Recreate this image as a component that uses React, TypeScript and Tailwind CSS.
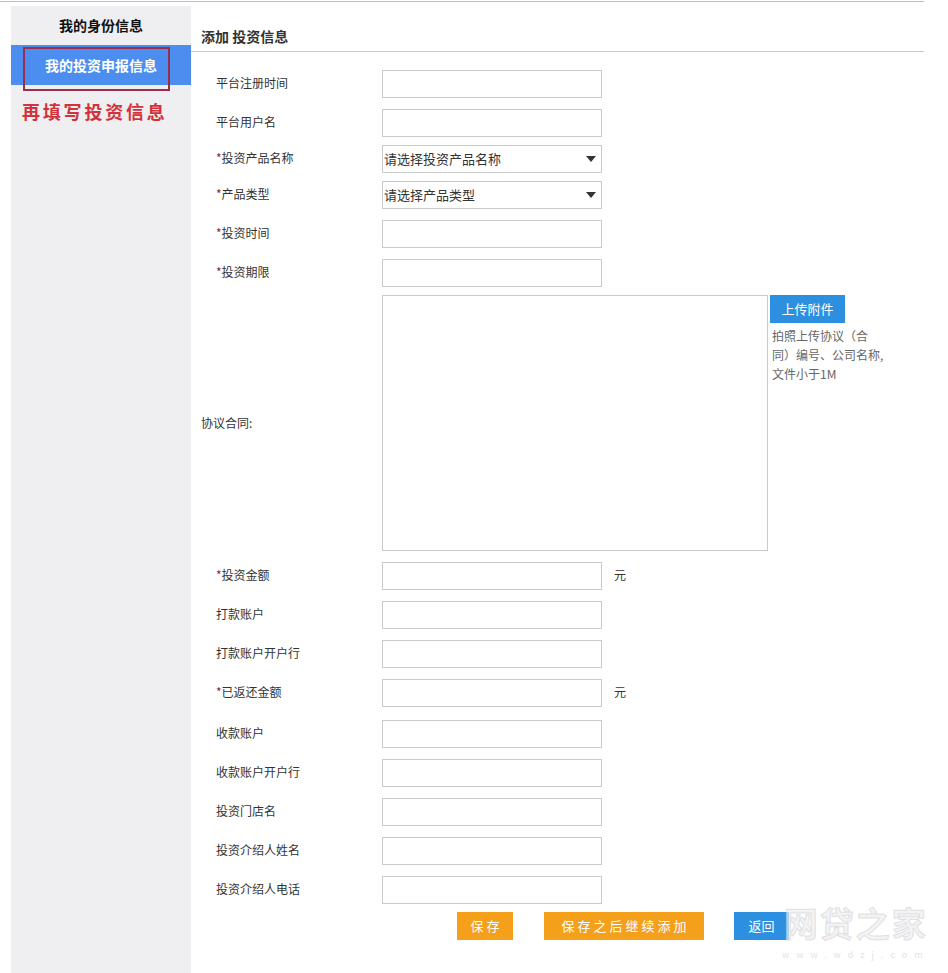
import React from "react";

const FONT = { fontFamily: '"Noto Sans CJK SC", "Noto Sans", sans-serif' };

type RowDef = {
  label: string;
  req?: boolean;
  select?: string;
  unit?: boolean;
  mt: string;
};

const topRows: RowDef[] = [
  { label: "平台注册时间", mt: "mt-[18px]" },
  { label: "平台用户名", mt: "mt-[11px]" },
  { label: "投资产品名称", req: true, select: "请选择投资产品名称", mt: "mt-[8px]" },
  { label: "产品类型", req: true, select: "请选择产品类型", mt: "mt-[8px]" },
  { label: "投资时间", req: true, mt: "mt-[11px]" },
  { label: "投资期限", req: true, mt: "mt-[11px]" },
];

const bottomRows: RowDef[] = [
  { label: "投资金额", req: true, unit: true, mt: "mt-[11px]" },
  { label: "打款账户", mt: "mt-[11px]" },
  { label: "打款账户开户行", mt: "mt-[11px]" },
  { label: "已返还金额", req: true, unit: true, mt: "mt-[11px]" },
  { label: "收款账户", mt: "mt-[13px]" },
  { label: "收款账户开户行", mt: "mt-[11px]" },
  { label: "投资门店名", mt: "mt-[11px]" },
  { label: "投资介绍人姓名", mt: "mt-[11px]" },
  { label: "投资介绍人电话", mt: "mt-[11px]" },
];

function Row({ r }: { r: RowDef }) {
  return (
    <div className={`flex items-center h-[28px] ${r.mt}`}>
      <div className="w-[191px] pl-[25px] pb-[3px] text-[12px] text-[#333] flex items-center">
        {r.req && <span className="text-[#8c1c3c] text-[12px] leading-none">*</span>}
        <span>{r.label}</span>
      </div>
      {r.select ? (
        <div className="w-[220px] h-[28px] border border-[#cacacd] bg-white flex items-center justify-between pl-[1px] pr-[5px]">
          <span className="text-[13px] text-[#333]">{r.select}</span>
          <svg width="10" height="6" viewBox="0 0 10 6">
            <path d="M0 0 L10 0 L5 6 Z" fill="#333" />
          </svg>
        </div>
      ) : (
        <div className="w-[220px] h-[28px] border border-[#cacacd] bg-white" />
      )}
      {r.unit && <span className="ml-[12px] pb-[3px] text-[12px] text-[#333]">元</span>}
    </div>
  );
}

export default function App() {
  return (
    <div className="w-[948px] h-[973px] bg-white relative overflow-hidden" style={FONT}>
      <div className="h-[1px] mt-[1px] w-[924px] bg-[#bdbdbd]" />
      <div className="flex mt-[4px] ml-[11px] h-[967px]">
        {/* Sidebar */}
        <div className="w-[180px] h-full bg-[#efeef1] relative">
          <div className="h-[39px] flex items-center justify-center text-[14px] font-bold text-[#111]">
            我的身份信息
          </div>
          <div className="h-[40px] bg-[#4b8ef0] flex items-center justify-center text-[14px] font-bold text-white">
            我的投资申报信息
          </div>
          <div className="pl-[11px] mt-[15px] text-[18px] font-bold tracking-[2.8px] text-[#d2323a] leading-[22px]">
            再填写投资信息
          </div>
          <div className="absolute left-[12px] top-[41px] w-[147px] h-[44px] border-2 border-[#9e2c4c]" />
        </div>

        {/* Main */}
        <div className="w-[733px]">
          <div className="h-[46px] border-b border-[#c8c8c8] pl-[10px] pt-[22px] text-[14px] font-bold text-[#333] leading-[16px]">
            添加 投资信息
          </div>
          {topRows.map((r) => (
            <Row key={r.label} r={r} />
          ))}
          <div className="flex mt-[8px]">
            <div className="w-[191px] pl-[10px] h-[256px] flex items-center text-[12px] text-[#333]">
              协议合同:
            </div>
            <div className="w-[386px] h-[256px] border border-[#cacacd] bg-white" />
            <div className="ml-[2px]">
              <div className="w-[75px] h-[28px] bg-[#2d8fe0] text-white text-[13px] flex items-center justify-center">
                上传附件
              </div>
              <div className="mt-[3px] ml-[2px] text-[12px] leading-[19px] text-[#666] whitespace-nowrap">
                拍照上传协议（合
                <br />
                同）编号、公司名称,
                <br />
                文件小于1M
              </div>
            </div>
          </div>
          {bottomRows.map((r) => (
            <Row key={r.label} r={r} />
          ))}
          <div className="flex mt-[8px] ml-[266px] text-white text-[13px] tracking-[3px]">
            <div className="w-[56px] h-[28px] bg-[#f4a01b] flex items-center justify-center pl-[3px]">保存</div>
            <div className="w-[160px] h-[28px] ml-[31px] bg-[#f4a01b] flex items-center justify-center pl-[3px]">
              保存之后继续添加
            </div>
            <div className="w-[55px] h-[28px] ml-[30px] bg-[#2d8fe0] flex items-center justify-center tracking-[0px]">
              返回
            </div>
          </div>
        </div>
      </div>

      {/* watermark */}
      <div className="absolute left-[782px] top-[904px] flex flex-col items-center gap-[8px] pointer-events-none">
        <div
          className="text-[34px] font-bold leading-[38px] text-[rgba(238,238,240,0.7)] tracking-[2px]"
          style={{ WebkitTextStroke: "1px rgba(200,200,205,0.5)" }}
        >
          网贷之家
        </div>
        <div className="text-[9px] tracking-[7px] text-[rgba(205,205,210,0.6)] leading-[10px]">www.wdzj.com</div>
      </div>
    </div>
  );
}
